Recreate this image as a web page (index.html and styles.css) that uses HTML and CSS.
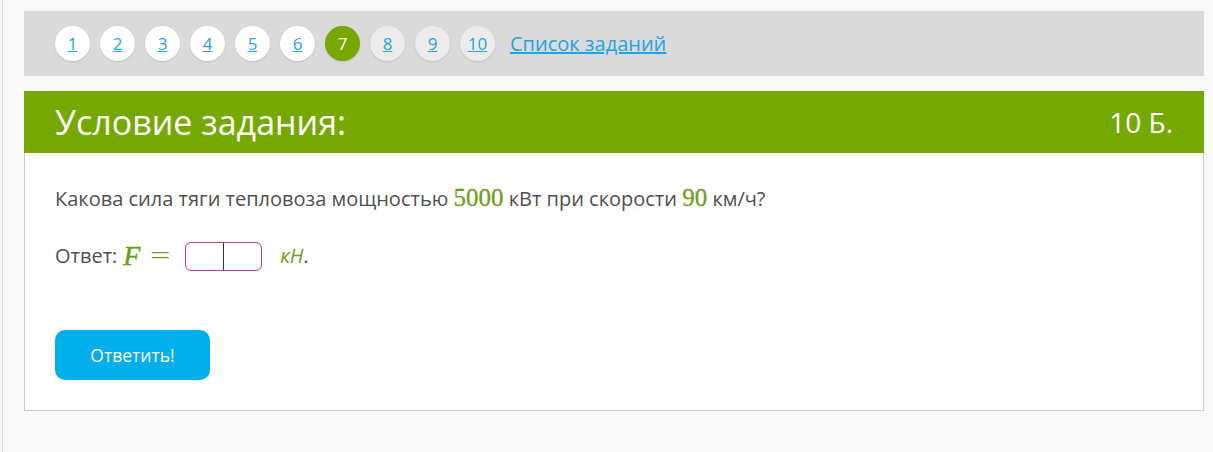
FILE: index.html
```html
<html>
<head>
    <title>Условие задания</title>
    <link rel="stylesheet" href="styles.css">
</head>
<body>
    <div id="page">

        <div id="task-nav">
            <a class="num" href="#">1</a>
            <a class="num" href="#">2</a>
            <a class="num" href="#">3</a>
            <a class="num" href="#">4</a>
            <a class="num" href="#">5</a>
            <a class="num" href="#">6</a>
            <span class="num active">7</span>
            <a class="num seen" href="#">8</a>
            <a class="num seen" href="#">9</a>
            <a class="num seen" href="#">10</a>
            <a class="task-list" href="#">Список заданий</a>
        </div>

        <div id="task-head">
            <div id="task-title">Условие задания:</div>
            <div id="task-score">10 Б.</div>
        </div>

        <div id="task-body">
            <p class="question">
                Какова сила тяги тепловоза мощностью <span class="math">5000</span> кВт при скорости <span class="math">90</span> км/ч?
            </p>

            <p class="answer">
                Ответ: <span class="math var">F</span><span class="math eq">=</span>
                <span class="input-box"><span class="caret"></span></span>
                <span class="unit">кН</span>.
            </p>

            <button class="submit">Ответить!</button>
        </div>

    </div>
</body>
</html>
```

FILE: styles.css
```css
body {
    background: #f9f9f9;
    font-family: 'Open Sans', sans-serif;
    margin: 0px;
    padding: 0px;
}

#page {
    margin-left: 2px;
    border-left: 1px solid #d9d9d9;
    min-height: 452px;
    padding: 11px 9px 0px 21px;
}

#task-nav {
    background: #dadada;
    height: 65px;
    padding-left: 31px;
    display: flex;
    align-items: center;
    gap: 10px;
}

.num {
    width: 35px;
    height: 35px;
    border-radius: 50%;
    background: #ffffff;
    box-shadow: 0 1px 2px rgba(0, 0, 0, 0.12);
    color: #2aa3d6;
    font-size: 17px;
    display: flex;
    align-items: center;
    justify-content: center;
}

.num.seen {
    background: #ececec;
}

.num.active {
    background: #76a800;
    color: #ffffff;
}

.task-list {
    color: #1ea5e0;
    font-size: 20px;
    margin-left: 5px;
}

#task-head {
    margin-top: 15px;
    background: #76a900;
    height: 62px;
    padding: 0px 31px;
    color: #ffffff;
    display: flex;
    align-items: center;
    justify-content: space-between;
}

#task-title {
    font-size: 34px;
}

#task-score {
    font-size: 28px;
}

#task-body {
    background: #ffffff;
    border: 1px solid #cccccc;
    border-top: none;
    padding: 30px 30px 30px 30px;
    color: #505050;
    font-size: 20px;
}

.question {
    margin: 0px;
    line-height: 30px;
}

.answer {
    margin: 27px 0px 0px 0px;
    line-height: 30px;
    height: 30px;
    display: flex;
    align-items: center;
}

.math {
    font-family: 'Liberation Serif', 'DejaVu Serif', serif;
    color: #6f9e1c;
    font-size: 25px;
    -webkit-text-stroke: 0.3px #6f9e1c;
}

.var {
    font-style: italic;
    font-size: 28px;
    margin-left: 6px;
    -webkit-text-stroke: 0.5px #6f9e1c;
}

.eq {
    display: inline-block;
    font-size: 26px;
    -webkit-text-stroke: 0px;
    transform: scaleX(1.4);
    margin-left: 13px;
    margin-right: 17px;
}

.input-box {
    width: 75px;
    height: 27px;
    border: 1px solid #c2418c;
    border-radius: 6px;
    box-shadow: inset 0 0 1px #e6a8c9;
    display: inline-flex;
    justify-content: center;
}

.caret {
    width: 1px;
    height: 27px;
    background: #333333;
}

.unit {
    color: #6f9e1c;
    font-style: italic;
    margin-left: 18px;
}

.submit {
    margin-top: 59px;
    background: #03aeed;
    border: none;
    border-radius: 10px;
    color: #ffffff;
    font-family: 'Open Sans', sans-serif;
    font-size: 17.5px;
    width: 155px;
    height: 50px;
    cursor: pointer;
}
```
